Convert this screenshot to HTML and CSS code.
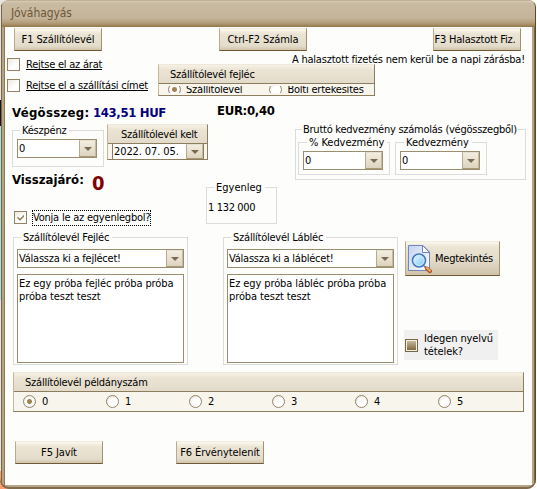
FILE: index.html
```html
<!DOCTYPE html>
<html lang="hu">
<head>
<meta charset="utf-8">
<title>Jóváhagyás</title>
<link rel="stylesheet" href="styles.css">
</head>
<body>
<div class="window">
  <header class="title"><span>Jóváhagyás</span></header>
  <main class="content">
    <div class="row actions">
      <button class="btn">F1 Szállítólevél</button>
      <button class="btn">Ctrl-F2 Számla</button>
      <button class="btn tight">F3 Halasztott Fiz.</button>
    </div>

    <div class="row options">
      <div class="checks">
        <label class="check"><i class="box"></i><span class="link">Rejtse el az árat</span></label>
        <label class="check"><i class="box"></i><span class="link">Rejtse el a szállítási címet</span></label>
      </div>
      <div class="notice-col">
        <p class="notice">A halasztott fizetés nem kerül be a napi zárásba!</p>
        <section class="panel header-type">
          <h2>Szállítólevél fejléc</h2>
          <div class="clipped">
            <label><i class="radio on"></i><span>Szállítólevél</span></label>
            <label><i class="radio"></i><span>Bolti értékesítés</span></label>
          </div>
        </section>
      </div>
    </div>

    <div class="row totals">
      <strong class="sum-label">Végösszeg:</strong>
      <strong class="sum">143,51 HUF</strong>
      <strong class="eur">EUR:0,40</strong>
    </div>

    <div class="row payment">
      <div class="pay-left">
        <div class="row">
          <fieldset class="cash"><legend>Készpénz</legend>
            <div class="combo"><span>0</span><i class="arrow"></i></div>
          </fieldset>
          <section class="panel date">
            <h2>Szállítólevél kelt</h2>
            <div class="date-body"><span>2022. 07. 05.</span><i class="arrow"></i></div>
          </section>
        </div>
        <div class="row balance-row">
          <div class="change-col">
            <div class="change"><strong class="change-label">Visszajáró:</strong><strong class="zero">0</strong></div>
            <label class="check deduct"><i class="box ticked"><svg viewBox="0 0 11 11"><path d="M2.500 4.500v2L5 8.700l4-4v-2L5 6.700z"/></svg></i><span class="focus">Vonja le az egyenlegbol?</span></label>
          </div>
          <fieldset class="balance"><legend>Egyenleg</legend><span>1 132 000</span></fieldset>
        </div>
      </div>
      <fieldset class="discount"><legend>Bruttó kedvezmény számolás (végösszegből)</legend>
        <div class="row">
          <fieldset class="inner"><legend>% Kedvezmény</legend>
            <div class="combo"><span>0</span><i class="arrow"></i></div>
          </fieldset>
          <fieldset class="inner"><legend>Kedvezmény</legend>
            <div class="combo"><span>0</span><i class="arrow"></i></div>
          </fieldset>
        </div>
      </fieldset>
    </div>

    <div class="row texts">
      <fieldset class="text-block"><legend>Szállítólevél Fejléc</legend>
        <div class="combo"><span>Válassza ki a fejlécet!</span><i class="arrow"></i></div>
        <div class="memo">Ez egy próba fejléc próba próba<br>próba teszt teszt</div>
      </fieldset>
      <fieldset class="text-block"><legend>Szállítólevél Lábléc</legend>
        <div class="combo"><span>Válassza ki a láblécet!</span><i class="arrow"></i></div>
        <div class="memo">Ez egy próba lábléc próba próba<br>próba teszt teszt</div>
      </fieldset>
      <div class="side">
        <button class="btn preview">
          <svg viewBox="0 0 26 30" width="26" height="30">
            <defs>
              <linearGradient id="page" x1="0" y1="0" x2="1" y2="1"><stop offset="0" stop-color="#c3d2f2"/><stop offset="1" stop-color="#fff"/></linearGradient>
              <linearGradient id="lens" x1="0" y1="0" x2="1" y2="1"><stop offset="0" stop-color="#f0fcff"/><stop offset="1" stop-color="#72c6f5"/></linearGradient>
            </defs>
            <path d="M1.500 1.500H16L22.500 8V26.500H1.500Z" fill="url(#page)" stroke="#6f86be"/>
            <path d="M15.500 1.500V8.500H22.500Z" fill="#fff" stroke="#6f86be"/>
            <path d="M17 22l2.500 2" stroke="#777d8c" stroke-width="2"/>
            <path d="M20 24.500l3 2.700" stroke="#a95722" stroke-width="4" stroke-linecap="round"/>
            <path d="M20 24l3 2.700" stroke="#f3aa62" stroke-width="2" stroke-linecap="round"/>
            <circle cx="12" cy="16.500" r="6.500" fill="url(#lens)" stroke="#4a75b8" stroke-width="1.600"/>
            <circle cx="12" cy="16.500" r="5" fill="none" stroke="#c9ecff"/>
          </svg>
          <span>Megtekintés</span>
        </button>
        <label class="foreign"><i class="box mixed"></i><span>Idegen nyelvű<br>tételek?</span></label>
      </div>
    </div>

    <section class="panel copies">
      <h2>Szállítólevél példányszám</h2>
      <div class="radios">
        <label><i class="radio on"></i>0</label>
        <label><i class="radio"></i>1</label>
        <label><i class="radio"></i>2</label>
        <label><i class="radio"></i>3</label>
        <label><i class="radio"></i>4</label>
        <label><i class="radio"></i>5</label>
      </div>
    </section>

    <div class="row footer">
      <button class="btn">F5 Javít</button>
      <button class="btn">F6 Érvénytelenít</button>
    </div>
  </main>
</div>
</body>
</html>
```
FILE: styles.css
```css
* { box-sizing: border-box; }
body {
  margin: 0;
  width: 537px;
  height: 489px;
  overflow: hidden;
  background:
    linear-gradient(#fff, #fff) right / 50% 100% no-repeat,
    linear-gradient(to bottom, #e4e4e2 0 100px, #151515 100px 126px, #a9e3d5 126px 300px, #e6e6e4 300px 471px, #ff9c74 471px);
  font: 11px/13px "DejaVu Sans Condensed", "DejaVu Sans", sans-serif;
  font-stretch: condensed;
  letter-spacing: -.22px;
  color: #000;
}
h2, p { margin: 0; font: inherit; }
i { display: block; flex: none; }
span, strong, legend { white-space: nowrap; }
.row { display: flex; align-items: flex-start; }

.window {
  width: 536px;
  height: 489px;
  padding: 0 4px 4px 5px;
  border-radius: 9px 7px 9px 9px;
  background: linear-gradient(to right, transparent 0 1px, #77664c 1px 2px, #b8a380 2px 4px, #8f7a57 4px 5px, #b8a587 5px 532px, #b8a380 532px 534px, #806640 534px 535px, #5f472a 535px);
  box-shadow: inset 0 -2px #806c4c;
}
.title {
  height: 27px;
  margin: 0 -3px 0 -3px;
  padding: 6px 0 0 9px;
  border-radius: 7px 7px 0 0;
  background: linear-gradient(to bottom, #a6967b 0, #d8ccb4 1px, #c9bba2 3px, #c4b499 18px, #b29d79 23px, #947749 27px);
  color: #6e5638;
  font-size: 12px;
  line-height: 14px;
  letter-spacing: -.1px;
}
.content { height: 458px; background: #fdfdfb; }

.btn {
  width: 88px;
  height: 23px;
  margin: 0;
  padding: 0;
  border: 1px solid;
  border-color: #f1ecdd #a4926c #6f5a35 #b8aa8c;
  background: linear-gradient(#fbf8ee, #ebe4d4 5px, #e4dccb 17px, #cfc3aa);
  font: inherit;
  letter-spacing: -.1px;
  color: #000;
  white-space: nowrap;
}
.actions { height: 25px; padding: 1px 11px 0 9px; justify-content: space-between; }
.actions .btn:nth-child(2) { margin-right: 9px; }
.tight { padding-right: 4px; letter-spacing: -.2px; }

.options { height: 46px; }
.checks { width: 153px; padding: 6px 0 0 2px; display: flex; flex-direction: column; gap: 8px; }
.check { display: flex; align-items: center; height: 13px; }
.box { width: 13px; height: 13px; border: 1px solid #938365; background: linear-gradient(135deg, #eee9de, #fff 60%); }
.link { margin: 0 0 1px 6px; height: 12px; border-bottom: 1px solid; line-height: 13px; }
.notice-col { width: 374px; }
.notice { height: 12px; padding-right: 7px; text-align: right; white-space: nowrap; line-height: 15px; letter-spacing: -.2px; }
.panel { border: 1px solid #8d7d5f; border-top-color: #eee8da; border-left-color: #c4b798; background: #f8f5ec; }
.panel h2 { height: 19px; border-bottom: 1px solid #8d7d5f; background: linear-gradient(#f6f1e5, #ebe4d4 5px, #e3dbca); line-height: 19px; padding-left: 11px; white-space: nowrap; }
.header-type { position: relative; width: 217px; height: 32px; }
.clipped { display: flex; height: 7px; margin-top: 2px; overflow: hidden; gap: 27px; padding-left: 9px; }
.clipped label { display: flex; gap: 5px; height: 13px; margin-top: -3px; }
.radio { width: 13px; height: 13px; border: 1px solid #93856a; border-radius: 50%; background: radial-gradient(circle at 60% 65%, #fff 45%, #ddd6c8); }
.radio.on { background: radial-gradient(circle, #a18250 0 2px, #fff 3px 4px, #e7e1d5); }

.totals { height: 26px; font-size: 13px; line-height: 18px; }
.sum-label { width: 81px; margin: 6px 0 0 7px; letter-spacing: .3px; }
.sum { width: 124px; margin-top: 6px; color: #000080; letter-spacing: -.35px; }
.eur { margin-top: 4px; letter-spacing: -.3px; }

fieldset { margin: 0; padding: 0; border: 1px solid #dcdcda; min-width: 0; }
legend { margin-left: 7px; padding: 0 3px 0 2px; height: 13px; }
.combo { display: flex; width: 80px; height: 19px; border: 1px solid #9b8d70; background: #fff; line-height: 18px; }
.combo span { flex: 1; padding-left: 1px; }
.arrow { width: 17px; height: 17px; border: 1px solid; border-color: #e5dfcf #c7bb9f #a99972 #b7aa8c; background: linear-gradient(#f2ede0, #ddd4bf); display: grid; place-items: center; }
.arrow::after { content: ""; border: 4px solid transparent; border-top-color: #7a6b50; border-bottom: 0; }

.payment { height: 107px; }
.pay-left { width: 290px; }
.cash { width: 92px; height: 43px; margin: 0 3px 0 7px; }
.cash .combo { margin: 2px 0 0 4px; }
.date { width: 101px; height: 36px; }
.date h2 { padding-left: 13px; }
.date-body { display: flex; height: 15px; margin-left: 4px; width: 92px; border-left: 1px solid #8d7d5f; border-right: 1px solid #8d7d5f; background: #fff; }
.date-body span { flex: 1; line-height: 16px; padding-left: 1px; letter-spacing: -.1px; }
.date-body .arrow { height: 15px; }
.balance-row { height: 64px; }
.change-col { width: 201px; padding-left: 7px; }
.change { display: flex; height: 28px; margin-top: 4px; font-size: 13px; line-height: 18px; }
.change-label { width: 80px; letter-spacing: 0; }
.zero { font-size: 20px; line-height: 25px; color: #800000; }
.deduct { margin: 12px 0 0 2px; }
.ticked svg { display: block; width: 11px; height: 11px; fill: #8d7955; }
.focus { margin-left: 5px; border: 1px dotted #000; height: 16px; line-height: 14px; }
.balance { width: 71px; height: 43px; margin-top: 14px; }
.balance legend { letter-spacing: 0; }
.balance > span { display: block; padding: 7px 0 0 1px; letter-spacing: -.35px; }
.discount { width: 231px; height: 57px; margin-top: -1px; }
.discount > legend { margin-left: 6px; padding: 0 1px; letter-spacing: -.25px; }
.discount > .row { padding-left: 2px; gap: 5px; }
.inner { width: 92px; height: 39px; letter-spacing: -.05px; }
.inner .combo { margin: 2px 0 0 4px; }
.inner legend { margin-left: 8px; }

.texts { height: 141px; }
.text-block { width: 175px; height: 134px; margin: 0 27px 0 8px; flex: none; }
.text-block .combo { width: 167px; margin: 5px 0 0 3px; }
.memo { width: 167px; height: 89px; margin: 6px 0 0 3px; padding: 2px 1px; border: 1px solid #9b8d70; background: #fff; white-space: nowrap; letter-spacing: -.1px; }
.side { width: 96px; margin-left: -20px; padding-top: 10px; }
.preview { display: flex; align-items: center; width: 95px; height: 35px; padding-left: 1px; gap: 2px; letter-spacing: -.25px; }
.foreign { display: flex; align-items: center; width: 94px; height: 30px; margin: 54px 0 0 -1px; padding-left: 1px; gap: 6px; background: #f0f0f0; letter-spacing: -.1px; }
.mixed { border: 1px solid #77673f; background: linear-gradient(#c7b99d, #806a3f) content-box #fff; padding: 1px; }

.copies { width: 511px; height: 40px; margin-left: 8px; }
.radios { display: flex; padding: 3px 0 0 9px; }
.radios label { display: flex; gap: 6px; width: 83px; line-height: 13px; }
.footer { margin-top: 29px; padding-left: 10px; gap: 73px; }
```
